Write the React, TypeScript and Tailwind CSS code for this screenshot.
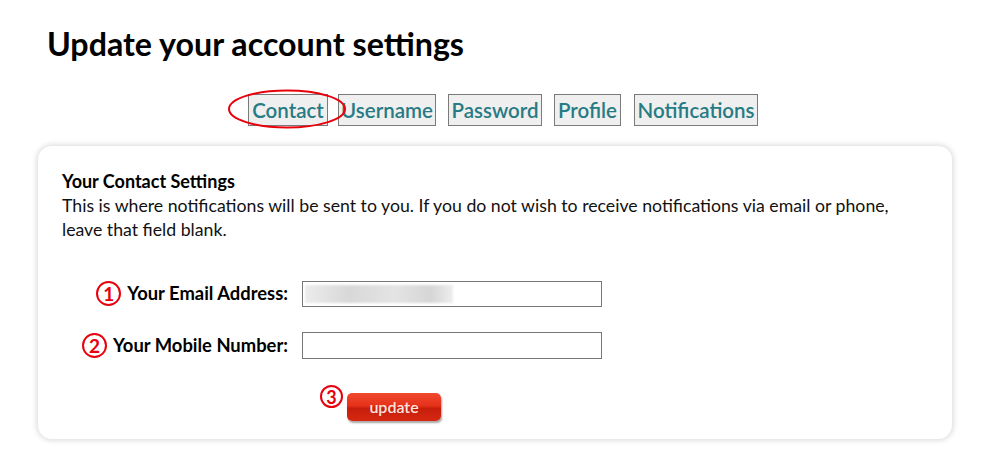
import React from "react"

const tabs = [
  { label: "Contact", w: "w-[80px]", ml: "ml-[248px]" },
  { label: "Username", w: "w-[98px]", ml: "ml-[10px]" },
  { label: "Password", w: "w-[94px]", ml: "ml-[12px]" },
  { label: "Profile", w: "w-[67px]", ml: "ml-[12px]" },
  { label: "Notifications", w: "w-[124px]", ml: "ml-[13px]" },
]

function NumBadge({ n }: { n: number }) {
  return (
    <span className="flex h-[25px] w-[25px] items-center justify-center rounded-full border-2 border-[#e8000b] text-[19px] font-bold leading-none text-[#e8000b]">
      {n}
    </span>
  )
}

export default function App() {
  return (
    <div className="h-[467px] w-[990px] bg-white font-['Lato','Noto_Sans',sans-serif] text-black">
      <h1 className="pl-[47px] pt-[24px] text-[32.2px] font-bold leading-[40px]">
        Update your account settings
      </h1>

      <div className="relative mt-[30px] flex h-[32px]">
        {tabs.map((t) => (
          <div
            key={t.label}
            className={`${t.ml} ${t.w} flex h-[32px] items-center justify-center border border-[#7a7a7a] bg-[#efefef] text-[20.5px] font-semibold text-[#267b84]`}
          >
            {t.label}
          </div>
        ))}
        {/* annotation ellipse around Contact */}
        <svg className="absolute left-[226px] top-[-6px]" width="122" height="42" viewBox="0 0 122 42">
          <ellipse cx="61" cy="21" rx="58" ry="18.5" fill="none" stroke="#e8000b" strokeWidth="2" />
        </svg>
      </div>

      <div className="mx-[38px] mt-[20px] h-[293px] rounded-[14px] bg-white px-[24px] pt-[24px] shadow-[0_0_5px_2px_rgba(0,0,0,0.12)]">
        <div className="text-[18px] font-bold leading-[22px]">Your Contact Settings</div>
        <p className="mt-[2px] text-[17.7px] leading-[24px] text-[#111]">
          This is where notifications will be sent to you. If you do not wish to receive notifications via email or phone,
          <br />
          leave that field blank.
        </p>

        <div className="mt-[38px] flex flex-col gap-[24px]">
          <div className="flex items-center">
            <div className="flex w-[226px] items-center justify-end gap-[6px]">
              <NumBadge n={1} />
              <span className="text-[18.4px] font-bold">Your Email Address:</span>
            </div>
            <div className="ml-[14px] flex h-[26px] w-[300px] items-center border border-[#777] bg-white px-[2px]">
              <div className="h-[18px] w-[148px] bg-[linear-gradient(90deg,#ececec,#d8d8d8_30%,#e4e4e4_60%,#d6d6d6_85%,#eeeeee)] blur-[1px]" />
            </div>
          </div>
          <div className="flex items-center">
            <div className="flex w-[226px] items-center justify-end gap-[6px]">
              <NumBadge n={2} />
              <span className="text-[18.4px] font-bold">Your Mobile Number:</span>
            </div>
            <div className="ml-[14px] h-[27px] w-[300px] border border-[#777] bg-white" />
          </div>
        </div>

        <div className="ml-[258px] mt-[26px] flex items-start gap-[4px]">
          <span className="flex h-[23px] w-[23px] items-center justify-center rounded-full border-2 border-[#e8000b] text-[18px] font-bold leading-none text-[#e8000b]">
            3
          </span>
          <button className="mt-[8px] h-[28px] w-[94px] rounded-[5px] bg-[linear-gradient(180deg,#f04a2e_0%,#e6321a_45%,#c61e0c_55%,#d62812_100%)] text-[16px] font-semibold text-[#fde4dc] shadow-[1px_2px_2px_rgba(0,0,0,0.35)] font-['Lato',sans-serif]">
            update
          </button>
        </div>
      </div>
    </div>
  )
}
